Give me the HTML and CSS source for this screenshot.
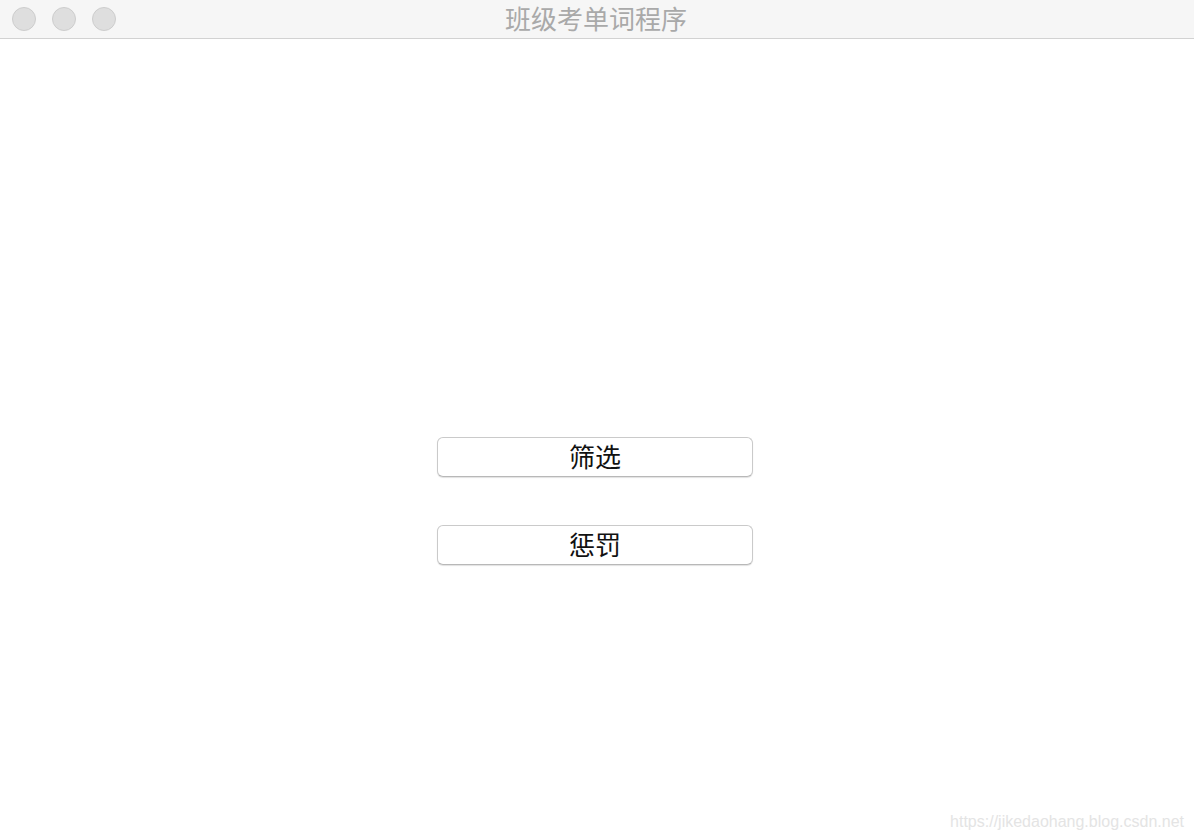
FILE: index.html
```html
<!DOCTYPE html>
<html lang="zh">
<head>
<meta charset="utf-8">
<title>班级考单词程序</title>
<link rel="stylesheet" href="styles.css">
</head>
<body>
<div class="window">
  <div class="titlebar">
    <div class="lights">
      <span class="light"></span>
      <span class="light"></span>
      <span class="light"></span>
    </div>
    <div class="title">班级考单词程序</div>
    <div class="spacer"></div>
  </div>
  <div class="content">
    <button class="btn">筛选</button>
    <button class="btn">惩罚</button>
  </div>
  <div class="watermark">https://jikedaohang.blog.csdn.net</div>
</div>
</body>
</html>
```
FILE: styles.css
```css
html, body {
  margin: 0;
  padding: 0;
  background: #ffffff;
}
.window {
  position: relative;
  width: 1194px;
  height: 838px;
  display: flex;
  flex-direction: column;
  overflow: hidden;
  font-family: "Noto Sans CJK SC", "Liberation Sans", sans-serif;
}
.titlebar {
  height: 38px;
  background: #f6f6f6;
  border-bottom: 1px solid #d2d2d2;
  display: grid;
  grid-template-columns: 1fr auto 1fr;
  align-items: center;
  flex-shrink: 0;
}
.lights {
  display: flex;
  gap: 16px;
  padding-left: 12px;
}
.light {
  width: 22px;
  height: 22px;
  border-radius: 50%;
  background: #dedede;
  border: 1px solid #cdcdcd;
}
.title {
  font-size: 26px;
  line-height: 30px;
  padding-bottom: 3px;
  padding-right: 2px;
  color: #a9a9a9;
  white-space: nowrap;
}
.content {
  flex: 1;
  display: flex;
  flex-direction: column;
  align-items: center;
  padding-top: 398px;
  padding-right: 4px;
  gap: 48px;
}
.btn {
  width: 316px;
  height: 40px;
  box-sizing: border-box;
  background: #ffffff;
  border: 1px solid #cacaca;
  border-bottom-color: #b8b8b8;
  border-radius: 6px;
  box-shadow: 0 1px 1px rgba(0,0,0,0.12);
  font-family: "Noto Sans CJK SC", sans-serif;
  font-size: 26px;
  line-height: 30px;
  color: #111111;
  padding: 0 0 3px 0;
  margin: 0;
}
.watermark {
  position: absolute;
  right: 10px;
  bottom: 7px;
  font-family: "Liberation Sans", Arial, sans-serif;
  font-size: 16px;
  color: #e4e4e4;
}
```
